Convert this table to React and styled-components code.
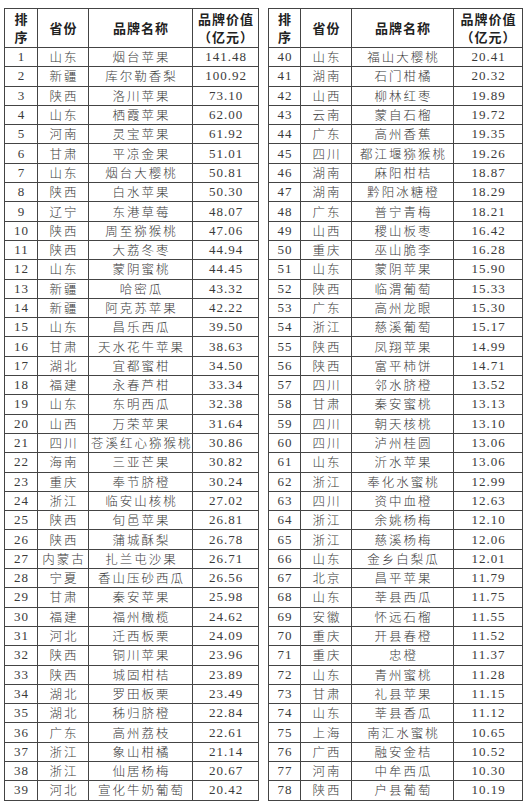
import React from 'react';
import styled, { createGlobalStyle } from 'styled-components';

const left = [
  [1, '山东', '烟台苹果', '141.48'],
  [2, '新疆', '库尔勒香梨', '100.92'],
  [3, '陕西', '洛川苹果', '73.10'],
  [4, '山东', '栖霞苹果', '62.00'],
  [5, '河南', '灵宝苹果', '61.92'],
  [6, '甘肃', '平凉金果', '51.01'],
  [7, '山东', '烟台大樱桃', '50.81'],
  [8, '陕西', '白水苹果', '50.30'],
  [9, '辽宁', '东港草莓', '48.07'],
  [10, '陕西', '周至猕猴桃', '47.06'],
  [11, '陕西', '大荔冬枣', '44.94'],
  [12, '山东', '蒙阴蜜桃', '44.45'],
  [13, '新疆', '哈密瓜', '43.32'],
  [14, '新疆', '阿克苏苹果', '42.22'],
  [15, '山东', '昌乐西瓜', '39.50'],
  [16, '甘肃', '天水花牛苹果', '38.63'],
  [17, '湖北', '宜都蜜柑', '34.50'],
  [18, '福建', '永春芦柑', '33.34'],
  [19, '山东', '东明西瓜', '32.38'],
  [20, '山西', '万荣苹果', '31.64'],
  [21, '四川', '苍溪红心猕猴桃', '30.86'],
  [22, '海南', '三亚芒果', '30.82'],
  [23, '重庆', '奉节脐橙', '30.24'],
  [24, '浙江', '临安山核桃', '27.02'],
  [25, '陕西', '旬邑苹果', '26.81'],
  [26, '陕西', '蒲城酥梨', '26.78'],
  [27, '内蒙古', '扎兰屯沙果', '26.71'],
  [28, '宁夏', '香山压砂西瓜', '26.56'],
  [29, '甘肃', '秦安苹果', '25.98'],
  [30, '福建', '福州橄榄', '24.62'],
  [31, '河北', '迁西板栗', '24.09'],
  [32, '陕西', '铜川苹果', '23.96'],
  [33, '陕西', '城固柑桔', '23.89'],
  [34, '湖北', '罗田板栗', '23.49'],
  [35, '湖北', '秭归脐橙', '22.84'],
  [36, '广东', '高州荔枝', '22.61'],
  [37, '浙江', '象山柑橘', '21.14'],
  [38, '浙江', '仙居杨梅', '20.67'],
  [39, '河北', '宣化牛奶葡萄', '20.42'],
];

const right = [
  [40, '山东', '福山大樱桃', '20.41'],
  [41, '湖南', '石门柑橘', '20.32'],
  [42, '山西', '柳林红枣', '19.89'],
  [43, '云南', '蒙自石榴', '19.72'],
  [44, '广东', '高州香蕉', '19.35'],
  [45, '四川', '都江堰猕猴桃', '19.26'],
  [46, '湖南', '麻阳柑桔', '18.87'],
  [47, '湖南', '黔阳冰糖橙', '18.29'],
  [48, '广东', '普宁青梅', '18.21'],
  [49, '山西', '稷山板枣', '16.42'],
  [50, '重庆', '巫山脆李', '16.28'],
  [51, '山东', '蒙阴苹果', '15.90'],
  [52, '陕西', '临渭葡萄', '15.33'],
  [53, '广东', '高州龙眼', '15.30'],
  [54, '浙江', '慈溪葡萄', '15.17'],
  [55, '陕西', '凤翔苹果', '14.99'],
  [56, '陕西', '富平柿饼', '14.71'],
  [57, '四川', '邻水脐橙', '13.52'],
  [58, '甘肃', '秦安蜜桃', '13.13'],
  [59, '四川', '朝天核桃', '13.10'],
  [60, '四川', '泸州桂圆', '13.06'],
  [61, '山东', '沂水苹果', '13.06'],
  [62, '浙江', '奉化水蜜桃', '12.99'],
  [63, '四川', '资中血橙', '12.63'],
  [64, '浙江', '余姚杨梅', '12.10'],
  [65, '浙江', '慈溪杨梅', '12.06'],
  [66, '山东', '金乡白梨瓜', '12.01'],
  [67, '北京', '昌平苹果', '11.79'],
  [68, '山东', '莘县西瓜', '11.75'],
  [69, '安徽', '怀远石榴', '11.55'],
  [70, '重庆', '开县春橙', '11.52'],
  [71, '重庆', '忠橙', '11.37'],
  [72, '山东', '青州蜜桃', '11.28'],
  [73, '甘肃', '礼县苹果', '11.15'],
  [74, '山东', '莘县香瓜', '11.12'],
  [75, '上海', '南汇水蜜桃', '10.65'],
  [76, '广西', '融安金桔', '10.52'],
  [77, '河南', '中牟西瓜', '10.30'],
  [78, '陕西', '户县葡萄', '10.19'],
];

const GlobalStyle = createGlobalStyle`
  body {
    margin: 0;
    background: #fff;
    color: #333;
    font-family: "Noto Sans CJK SC", "Liberation Serif", serif;
  }
`;

const Page = styled.div`
  display: flex;
  gap: 9px;
  padding: 8px 0 0 4px;
`;

const Table = styled.table`
  border-collapse: collapse;
  table-layout: fixed;
  width: 254px;
  border: 1.5px solid #3a3a3a;
`;

const HeadCell = styled.th`
  height: 38px;
  padding: 0 0 0 1px;
  border: 1px solid #444;
  font-size: 13px;
  font-weight: 700;
  line-height: 18px;
  color: #222;
  text-align: center;
  letter-spacing: 1px;
`;

const Cell = styled.td`
  height: 18.3px;
  padding: ${p => (p.$num ? '0 0 0 1px' : '0 0 0 2px')};
  border: 1px solid #444;
  text-align: center;
  font-size: ${p => (p.$num ? '13px' : '12.5px')};
  line-height: 18px;
  letter-spacing: ${p => (p.$num ? '1px' : '2px')};
  font-family: ${p =>
    p.$num ? '"Liberation Serif", serif' : '"Noto Sans CJK SC", sans-serif'};
  font-weight: 300;
  color: #3a3a3a;
  white-space: nowrap;
  overflow: hidden;
`;

function RankTable({ rows, widths }) {
  return (
    <Table>
      <colgroup>
        {widths.map((w, i) => (
          <col key={i} style={{ width: w }} />
        ))}
      </colgroup>
      <thead>
        <tr>
          <HeadCell>排<br />序</HeadCell>
          <HeadCell>省份</HeadCell>
          <HeadCell>品牌名称</HeadCell>
          <HeadCell>品牌价值<br />（亿元）</HeadCell>
        </tr>
      </thead>
      <tbody>
        {rows.map(([rank, prov, name, value]) => (
          <tr key={rank}>
            <Cell $num>{rank}</Cell>
            <Cell>{prov}</Cell>
            <Cell>{name}</Cell>
            <Cell $num>{value}</Cell>
          </tr>
        ))}
      </tbody>
    </Table>
  );
}

export default function App() {
  return (
    <>
      <GlobalStyle />
      <Page>
        <RankTable rows={left} widths={[33, 51, 104, 66]} />
        <RankTable rows={right} widths={[32, 51, 102, 69]} />
      </Page>
    </>
  );
}
